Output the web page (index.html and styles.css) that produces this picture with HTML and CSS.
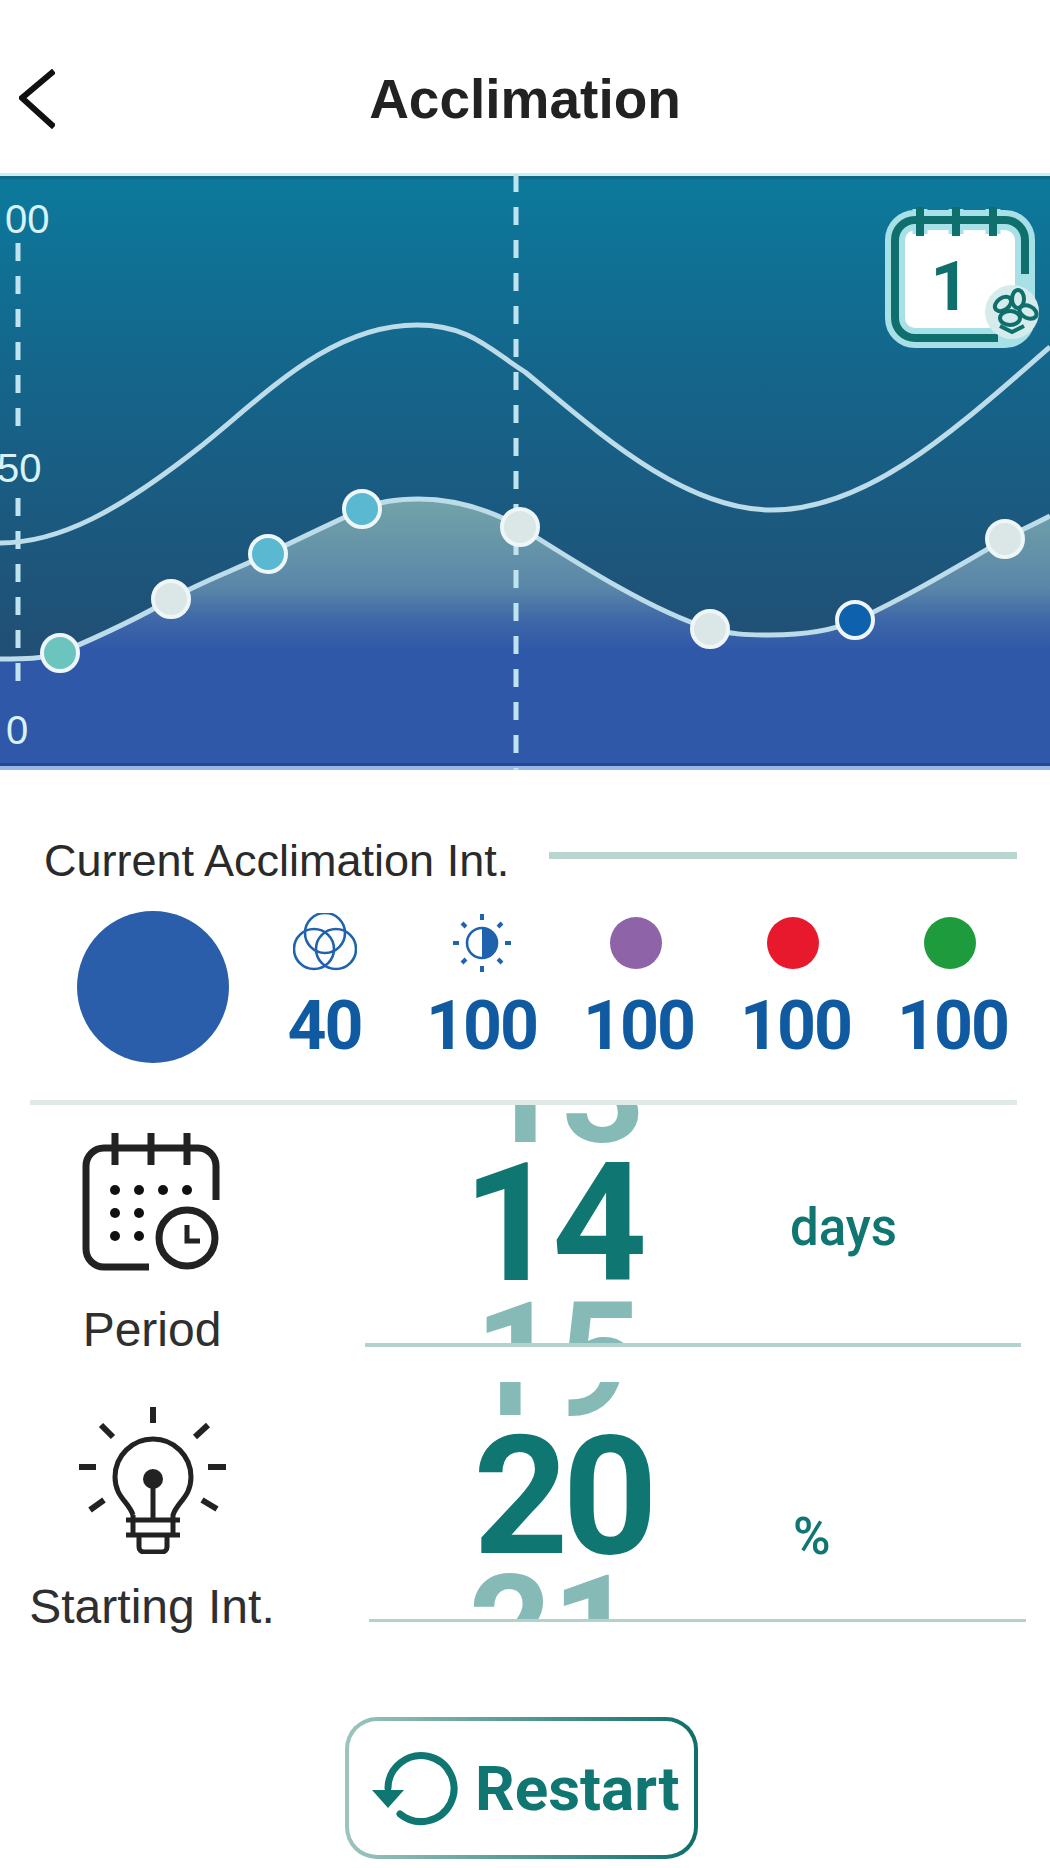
FILE: index.html
```html
<!DOCTYPE html>
<html lang="en">
<head>
    <meta charset="UTF-8">
    <meta name="viewport" content="width=device-width, initial-scale=1.0">
    <title>Acclimation</title>
    <link rel="stylesheet" href="styles.css">
</head>
<body>
    <header class="topbar">
        <svg class="back" width="36" height="60" viewBox="0 0 36 60">
            <polyline points="35,2 3,29 35,58"></polyline>
        </svg>
        <h1>Acclimation</h1>
    </header>

    <svg class="chart" width="1050" height="597" viewBox="0 173 1050 597">
        <defs>
            <linearGradient id="sky" x1="0" y1="0" x2="0" y2="1">
                <stop offset="0" stop-color="#0c7a9c"></stop>
                <stop offset="0.35" stop-color="#15648a"></stop>
                <stop offset="0.8" stop-color="#214f75"></stop>
                <stop offset="1" stop-color="#214f75"></stop>
            </linearGradient>
            <linearGradient id="area" gradientUnits="userSpaceOnUse" x1="0" y1="495" x2="0" y2="650">
                <stop offset="0" stop-color="#74a5a8"></stop>
                <stop offset="0.6" stop-color="#5a86a8"></stop>
                <stop offset="0.8" stop-color="#3f68a8"></stop>
                <stop offset="1" stop-color="#3058a8"></stop>
            </linearGradient>
        </defs>
        <rect x="0" y="173" width="1050" height="597" fill="url(#sky)"></rect>
        <path fill="url(#area)" d="M0 659 C25 659 42 659 60 653 C100 636 135 620 171 599 C205 580 235 570 268 554 C300 538 335 522 362 509 C375 503 392 499 418 499 C455 499 490 510 520 527 C580 565 650 610 710 629 C730 634 745 635 770 635 C800 635 830 632 857 620 C910 595 955 568 1005 539 C1020 530 1035 524 1050 516 V770 H0 Z"></path>
        <rect x="0" y="173" width="1050" height="3" fill="#cdeef2"></rect>
        <rect x="0" y="176" width="1050" height="3" fill="#0c6a88"></rect>
        <rect x="0" y="763" width="1050" height="3" fill="#1f4a9c"></rect>
        <rect x="0" y="766" width="1050" height="4" fill="#9ab6e6"></rect>

        <line class="dash" x1="18" y1="243" x2="18" y2="433"></line>
        <line class="dash" x1="18" y1="498" x2="18" y2="690"></line>
        <line class="dash" x1="516" y1="174" x2="516" y2="770"></line>

        <path class="curve" d="M0 543 C60 543 120 510 200 447 C265 395 330 325 417 325 C470 325 490 350 525 372 C590 425 680 510 772 510 C870 510 960 425 1050 347"></path>
        <path class="curve" d="M0 659 C25 659 42 659 60 653 C100 636 135 620 171 599 C205 580 235 570 268 554 C300 538 335 522 362 509 C375 503 392 499 418 499 C455 499 490 510 520 527 C580 565 650 610 710 629 C730 634 745 635 770 635 C800 635 830 632 857 620 C910 595 955 568 1005 539 C1020 530 1035 524 1050 516"></path>

        <text class="axis" x="5" y="233">00</text>
        <text class="axis" x="-3" y="482">50</text>
        <text class="axis" x="6" y="744">0</text>

        <circle class="dot" cx="60" cy="653" r="18" fill="#6cc4bf"></circle>
        <circle class="dot" cx="171" cy="599" r="18" fill="#dbe6e6"></circle>
        <circle class="dot" cx="268" cy="554" r="18" fill="#5ab8d0"></circle>
        <circle class="dot" cx="362" cy="509" r="18" fill="#5ab8d0"></circle>
        <circle class="dot" cx="520" cy="527" r="18" fill="#dbe6e6"></circle>
        <circle class="dot" cx="710" cy="629" r="18" fill="#dbe6e6"></circle>
        <circle class="dot" cx="855" cy="620" r="18" fill="#0e62ad"></circle>
        <circle class="dot" cx="1005" cy="539" r="18" fill="#dbe6e6"></circle>

        <!-- day badge -->
        <g class="badge">
            <rect x="895" y="220" width="130" height="118" rx="20" fill="#fff" stroke="#a8e0e8" stroke-width="20"></rect>
            <path class="badge-ring-glow" d="M920 209 V234 M956 209 V234 M993 209 V234"></path>
            <path class="badge-line" d="M1025 274 V240 a20 20 0 0 0 -20 -20 H915 a20 20 0 0 0 -20 20 V318 a20 20 0 0 0 20 20 H998"></path>
            <path class="badge-line" d="M920 207 V236 M956 207 V236 M993 207 V236"></path>
            <text class="badge-day" x="950" y="310">1</text>
            <circle cx="1012" cy="312" r="27" fill="#d6ecec"></circle>
            <ellipse class="petal" cx="1003" cy="304" rx="9" ry="6" transform="rotate(-35 1003 304)"></ellipse>
            <ellipse class="petal" cx="1018" cy="299" rx="6" ry="9"></ellipse>
            <ellipse class="petal" cx="1028" cy="312" rx="9" ry="6" transform="rotate(25 1028 312)"></ellipse>
            <ellipse class="petal" cx="1010" cy="318" rx="10" ry="7"></ellipse>
            <path class="petal" d="M1000 326 L1012 332 L1024 326"></path>
        </g>
    </svg>

    <section class="current">
        <div class="current-head">
            <span class="current-title">Current Acclimation Int.</span>
            <span class="current-line"></span>
        </div>
        <div class="current-body">
            <span class="swatch"></span>
            <div class="channels">
                <div class="channel">
                    <svg class="channel-icon" width="64" height="60" viewBox="0 0 64 60">
                        <circle cx="32" cy="20" r="20"></circle>
                        <circle cx="21" cy="36" r="20"></circle>
                        <circle cx="43" cy="36" r="20"></circle>
                    </svg>
                    <span class="channel-value">40</span>
                </div>
                <div class="channel">
                    <svg class="channel-icon" width="64" height="60" viewBox="0 0 64 60">
                        <circle cx="32" cy="30" r="15"></circle>
                        <path class="half" d="M32 15 A15 15 0 0 1 32 45 Z"></path>
                        <path class="rays" d="M32 1 V7 M32 53 V59 M3 30 H9 M55 30 H61 M12 10 L16 14 M52 10 L48 14 M12 50 L16 46 M52 50 L48 46"></path>
                    </svg>
                    <span class="channel-value">100</span>
                </div>
                <div class="channel">
                    <span class="led led-purple"></span>
                    <span class="channel-value">100</span>
                </div>
                <div class="channel">
                    <span class="led led-red"></span>
                    <span class="channel-value">100</span>
                </div>
                <div class="channel">
                    <span class="led led-green"></span>
                    <span class="channel-value">100</span>
                </div>
            </div>
        </div>
        <div class="divider"></div>
    </section>

    <section class="setting setting-period">
        <div class="setting-label">
            <svg class="period-icon" width="140" height="140" viewBox="0 0 140 140">
                <path d="M134 68 V34 a18 18 0 0 0 -18 -18 H22 a18 18 0 0 0 -18 18 V117 a18 18 0 0 0 18 18 H67"></path>
                <path d="M33 1 V33 M69 1 V33 M105 1 V33"></path>
                <circle cx="105" cy="106" r="28"></circle>
                <path class="hands" d="M105 93 V109 H118"></path>
                <g class="cells">
                    <circle cx="33" cy="58" r="5"></circle><circle cx="57" cy="58" r="5"></circle><circle cx="81" cy="58" r="5"></circle><circle cx="105" cy="58" r="5"></circle>
                    <circle cx="33" cy="81" r="5"></circle><circle cx="57" cy="81" r="5"></circle>
                    <circle cx="33" cy="104" r="5"></circle><circle cx="57" cy="104" r="5"></circle>
                </g>
            </svg>
            <span class="label-text">Period</span>
        </div>
        <div class="wheel">
            <div class="wheel-col">
                <span class="num ghost nudge-13">13</span>
                <span class="num active">14</span>
                <span class="num ghost nudge-15">15</span>
            </div>
            <span class="unit unit-days">days</span>
        </div>
    </section>

    <section class="setting setting-start">
        <div class="setting-label">
            <svg class="bulb-icon" width="147" height="147" viewBox="0 0 147 147">
                <path class="rays" d="M74 0 V16 M22 18 L34 30 M129 18 L116 30 M0 60 H17 M129 60 H147 M11 103 L25 93 M123 93 L138 102"></path>
                <path d="M54 108 C50 95 36 90 36 70 A38 38 0 0 1 112 70 C112 90 98 95 94 108 V128 M54 108 V128"></path>
                <path d="M47 113 H101 M47 128 H101"></path>
                <path d="M60 128 V140 a5 5 0 0 0 5 5 H83 a5 5 0 0 0 5 -5 V128"></path>
                <path d="M74 78 V113"></path>
                <circle class="filament" cx="74" cy="72" r="10"></circle>
            </svg>
            <span class="label-text">Starting Int.</span>
        </div>
        <div class="wheel">
            <div class="wheel-col">
                <span class="num ghost nudge-19">19</span>
                <span class="num active nudge-20">20</span>
                <span class="num ghost">21</span>
            </div>
            <span class="unit unit-percent">%</span>
        </div>
    </section>

    <div class="restart-wrap">
        <button class="restart" type="button">
            <svg width="90" height="80" viewBox="0 0 90 80">
                <path class="restart-arc" d="M18 40 A33 33 0 1 1 30 66"></path>
                <polygon points="2,42 34,42 18,60"></polygon>
            </svg>
            <span>Restart</span>
        </button>
    </div>
</body>
</html>
```

FILE: styles.css
```css
body {
    font-family: "Liberation Sans", Arial, sans-serif;
    background-color: #fff;
    color: #222;
    margin: 0;
    width: 1050px;
    height: 1868px;
    overflow: hidden;
}

.topbar {
    display: grid;
    grid-template-columns: 1fr auto 1fr;
    align-items: center;
    height: 173px;
    padding: 24px 0 0 19px;
    box-sizing: border-box;
}

.back {
    fill: none;
    stroke: #111;
    stroke-width: 6;
}

h1 {
    margin: 0 19px 0 0;
    font-size: 55px;
    font-weight: 700;
    color: #222;
}

.chart {
    display: block;
}

.dash {
    stroke: #bfe4f0;
    stroke-width: 5;
    stroke-dasharray: 18 15;
}

.curve {
    fill: none;
    stroke: #bcdcea;
    stroke-width: 5;
}

.axis {
    font-size: 40px;
    fill: #d8f2f8;
}

.dot {
    stroke: #eef6f8;
    stroke-width: 4;
}

.badge-line {
    fill: none;
    stroke: #0f6f6c;
    stroke-width: 8;
}

.badge-ring-glow {
    fill: none;
    stroke: #a8e0e8;
    stroke-width: 15;
}

.badge-day {
    font-family: Roboto, sans-serif;
    font-size: 68px;
    font-weight: 700;
    fill: #0f6f6c;
    text-anchor: middle;
}

.petal {
    fill: none;
    stroke: #0f6f6c;
    stroke-width: 4;
}

.current {
    padding-top: 68px;
}

.current-head {
    display: flex;
    align-items: center;
    gap: 40px;
    padding: 0 33px 0 44px;
}

.current-title {
    font-size: 45px;
    line-height: 46px;
    color: #2a2a2a;
    white-space: nowrap;
}

.current-line {
    flex: 1;
    height: 7px;
    margin-bottom: 12px;
    background-color: #b9d5cf;
}

.current-body {
    display: flex;
    margin-top: 27px;
    padding-left: 77px;
}

.swatch {
    width: 152px;
    height: 152px;
    border-radius: 50%;
    background-color: #2a5eaa;
    flex-shrink: 0;
}

.channels {
    display: grid;
    grid-template-columns: repeat(5, 157px);
    margin-left: 17px;
}

.channel {
    display: flex;
    flex-direction: column;
    align-items: center;
}

.channel-icon {
    fill: none;
    stroke: #1f62ae;
    stroke-width: 2.6;
    height: 60px;
    margin-top: 2px;
}

.channel-icon .half {
    fill: #1f62ae;
    stroke: none;
}

.channel-icon .rays {
    stroke-width: 4;
}

.led {
    width: 52px;
    height: 52px;
    margin: 6px 6px 4px 0;
    border-radius: 50%;
}

.led-purple {
    background-color: #8e63a8;
}

.led-red {
    background-color: #e8192c;
}

.led-green {
    background-color: #1e9b3c;
}

.channel-value {
    margin-top: 28px;
    font-family: Roboto, sans-serif;
    font-size: 68px;
    line-height: 50px;
    font-weight: 700;
    letter-spacing: -2px;
    color: #0f5aa0;
}

.divider {
    height: 5px;
    margin: 37px 33px 0 30px;
    background-color: #dfeae7;
}

.setting {
    display: flex;
    align-items: flex-start;
}

.setting-start {
    margin-top: 32px;
}

.setting-label {
    display: flex;
    flex-direction: column;
    align-items: center;
    flex-shrink: 0;
    width: 304px;
}

.setting-period .setting-label {
    padding-top: 27px;
}

.setting-start .setting-label {
    padding-top: 25px;
}

.period-icon {
    fill: none;
    stroke: #222;
    stroke-width: 7;
}

.period-icon .hands {
    stroke-width: 5;
}

.period-icon .cells {
    fill: #111;
    stroke: none;
}

.bulb-icon {
    fill: none;
    stroke: #222;
    stroke-width: 5;
}

.bulb-icon .rays {
    stroke-width: 6;
}

.bulb-icon .filament {
    fill: #222;
    stroke: none;
}

.label-text {
    margin-top: 38px;
    font-size: 48px;
    line-height: 40px;
    color: #2f2f2f;
}

.setting-start .label-text {
    margin-top: 33px;
}

.wheel {
    display: flex;
    align-items: center;
    flex: 1;
    height: 242px;
    box-sizing: border-box;
    margin: 0 29px 0 61px;
    border-bottom: 4px solid #b3d2cb;
}

.setting-start .wheel {
    height: 240px;
    margin: 0 24px 0 65px;
    border-bottom-width: 3px;
}

.wheel-col {
    display: flex;
    flex-direction: column;
    align-items: center;
    justify-content: center;
    gap: 20px;
    align-self: stretch;
    width: 374px;
    box-sizing: border-box;
    overflow: hidden;
    flex-shrink: 0;
}

.setting-start .wheel-col {
    width: 366px;
    padding-bottom: 8px;
}

.num {
    flex-shrink: 0;
    font-family: Roboto, sans-serif;
    font-weight: 700;
    color: #0f7671;
}

.num.active {
    font-size: 166px;
    line-height: 120px;
    letter-spacing: -6px;
}

.num.ghost {
    font-size: 145px;
    line-height: 103px;
    color: #86bab6;
}

.nudge-13 {
    margin-left: 20px;
}

.nudge-15 {
    margin-left: 12px;
}

.nudge-19 {
    margin-right: 10px;
}

.nudge-20 {
    margin-left: 21px;
}

.unit {
    margin-left: 51px;
    font-family: Roboto, sans-serif;
    font-size: 51px;
    font-weight: 500;
    color: #0f7671;
}

.unit-days {
    margin-top: 6px;
}

.unit-percent {
    margin-left: 58px;
    margin-top: 72px;
}

.restart-wrap {
    display: flex;
    justify-content: center;
    margin-top: 90px;
    padding-right: 7px;
}

.restart {
    display: flex;
    align-items: center;
    gap: 15px;
    width: 353px;
    height: 142px;
    padding: 0 0 0 21px;
    box-sizing: border-box;
    border: 4px solid transparent;
    border-radius: 32px;
    background: linear-gradient(#fff, #fff) padding-box, linear-gradient(90deg, #9cc4bd, #0f6f6b) border-box;
    font-family: Roboto, sans-serif;
    font-size: 62px;
    font-weight: 700;
    color: #0f7671;
}

.restart polygon {
    fill: #0f7671;
}

.restart-arc {
    fill: none;
    stroke: #0f7671;
    stroke-width: 7;
    stroke-linecap: round;
}
```
